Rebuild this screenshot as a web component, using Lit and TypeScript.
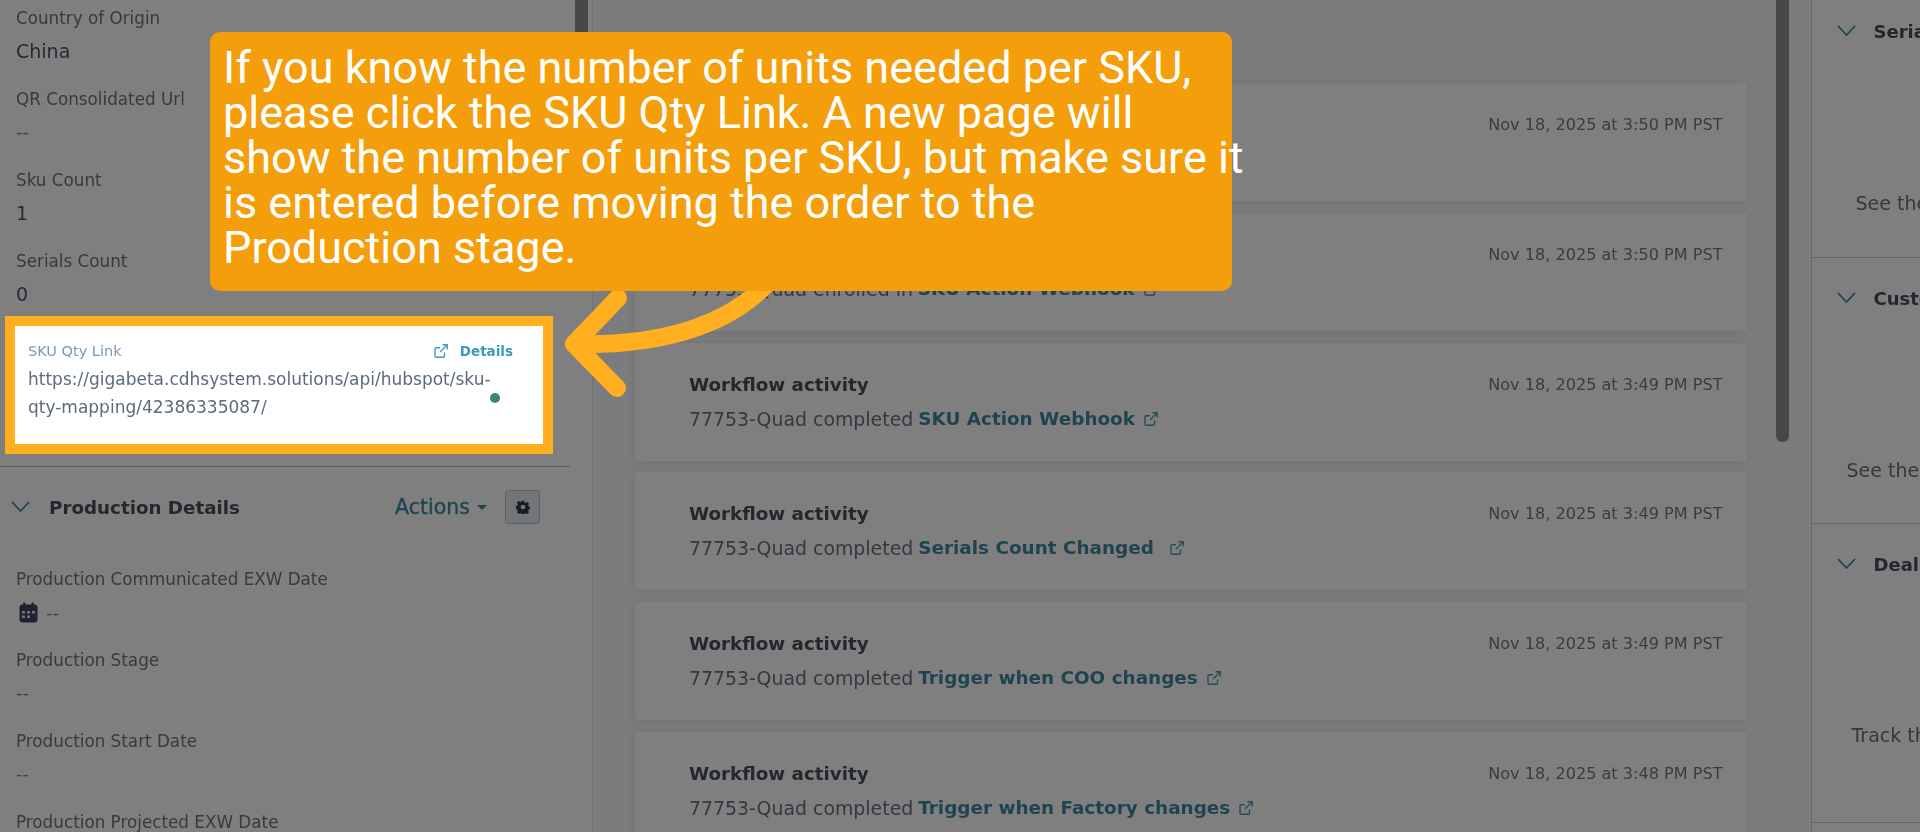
import { LitElement, html, css, svg } from "lit";
import { customElement } from "lit/decorators.js";

const ext = svg`<path d="M11.5 9.5V13a1.2 1.2 0 0 1-1.2 1.2H3.2A1.2 1.2 0 0 1 2 13V5.9a1.2 1.2 0 0 1 1.2-1.2H7" fill="none" stroke="currentColor" stroke-width="1.4"/><path d="M9.5 1.8h4.7v4.7M14 2 7 9" fill="none" stroke="currentColor" stroke-width="1.4"/>`;
const chev = svg`<path d="M1.5 1.5 9.5 10l8-8.500" fill="none" stroke="currentColor" stroke-width="1.800" stroke-linecap="round"/>`;

const fields1 = [
  ["Country of Origin", "China"],
  ["QR Consolidated Url", "--"],
  ["Sku Count", "1"],
  ["Serials Count", "0"],
];
const cards = [
  ["77753-Quad enrolled in ", "SKU Action", "Nov 18, 2025 at 3:50 PM PST", ""],
  ["77753-Quad enrolled in ", "SKU Action Webhook", "Nov 18, 2025 at 3:50 PM PST", ""],
  ["77753-Quad completed ", "SKU Action Webhook", "Nov 18, 2025 at 3:49 PM PST", ""],
  ["77753-Quad completed ", "Serials Count Changed", "Nov 18, 2025 at 3:49 PM PST", "wide"],
  ["77753-Quad completed ", "Trigger when COO changes", "Nov 18, 2025 at 3:49 PM PST", ""],
  ["77753-Quad completed ", "Trigger when Factory changes", "Nov 18, 2025 at 3:48 PM PST", ""],
];
const lines = [
  "If you know the number of units needed per SKU,",
  "please click the SKU Qty Link. A new page will",
  "show the number of units per SKU, but make sure it",
  "is entered before moving the order to the",
  "Production stage.",
];

@customElement("app-root")
export class AppRoot extends LitElement {
  static styles = css`
    :host { display: block; position: relative; width: 1920px; height: 832px; overflow: hidden; background: #fff;
      font-family: "DejaVu Sans", "Noto Sans", sans-serif; }
    .ui { display: grid; grid-template-columns: 593px 1217.500px 1fr; height: 832px; filter: blur(0.55px); overflow: hidden; }

    .left { position: relative; background: #fff; border-right: 1px solid #dfe3eb; box-sizing: border-box; padding-top: 6px; overflow: hidden; }
    .thumb1 { position: absolute; right: 4px; top: 0; width: 13px; height: 200px; background: #909090; }
    .field { height: 81px; padding-left: 16px; box-sizing: border-box; }
    .label { font-size: 16.800px; line-height: 24px; color: #6a7683; font-weight: 400; white-space: nowrap; }
    .value { font-size: 19px; line-height: 24px; margin-top: 9px; color: #46566a; white-space: nowrap; }
    .dash { color: #7a8898; font-size: 18px; }
    .sku { height: 120px; padding: 9px 0 0 28px; box-sizing: border-box; position: relative; }
    .sku-head { display: flex; align-items: center; height: 24px; padding-right: 79px; justify-content: space-between; }
    .sku-label { font-size: 14.500px; color: #7c98b6; }
    .details { display: flex; align-items: center; gap: 11px; font-size: 13.500px; font-weight: 700; color: #3e9ab8; }
    .details svg { width: 16px; height: 16px; }
    .url { font-size: 17px; line-height: 28px; color: #5c6b7c; margin-top: 2px; white-space: nowrap; }
    .dot { position: absolute; left: 490px; top: 63px; width: 10px; height: 10px; border-radius: 50%; background: #38857a; }
    .sep { border-top: 1px solid #bdbdbd; width: 570px; margin-top: 16px; }
    .head { display: flex; align-items: center; height: 34px; margin-top: 23px; padding-left: 11px; }
    .chev { width: 19px; height: 12px; color: #3f8a9a; flex: none; }
    .htitle { font-size: 18.300px; font-weight: 700; color: #46505e; margin-left: 19px; }
    .actions { margin-left: auto; display: flex; align-items: center; gap: 7px; font-size: 20.500px; font-weight: 400; -webkit-text-stroke: 0.35px #3f88a0; color: #3f88a0; }
    .caret { width: 0; height: 0; border-left: 5px solid transparent; border-right: 5px solid transparent; border-top: 5px solid #3f88a0; }
    .gear { width: 35px; height: 34px; box-sizing: border-box; margin: 0 52px 0 18px; border: 1px solid #b5c6d4; border-radius: 3px; background: #e5edf3; display: flex; align-items: center; justify-content: center; }
    .gear svg { width: 14px; height: 14px; }
    .fields2 { margin-top: 43px; }
    .datev { display: flex; align-items: center; gap: 8px; margin: 9px 0 0 3px; height: 24px; }
    .datev svg { width: 19px; height: 21px; }

    .main { background: #f5f8fa; padding: 83px 64px 0 42px; position: relative; display: flex; flex-direction: column; gap: 11.800px; overflow: hidden; }
    .thumb2 { position: absolute; right: 22px; top: 0; width: 13px; height: 442px; border-radius: 0 0 6px 6px; background: #909090; }
    .card { flex: none; height: 118px; box-sizing: border-box; background: #fff; border-radius: 3px; padding: 30px 24px 0 54px; box-shadow: 0 1px 10px rgba(45,62,80,.12); display: flex; justify-content: space-between; }
    .ctitle { font-size: 18.300px; line-height: 24px; font-weight: 700; color: #46505e; white-space: nowrap; }
    .cdesc { font-size: 18.900px; line-height: 24px; margin-top: 10px; color: #667280; white-space: nowrap; display: flex; align-items: center; }
    .link { font-size: 18.400px; font-weight: 700; color: #3f88a0; margin-left: 5px; }
    .cdesc svg { width: 16px; height: 16px; color: #4f98ae; margin-left: 8px; flex: none; }
    .cdesc svg.wide { margin-left: 15px; }
    .date { font-size: 16.100px; line-height: 24px; color: #707b86; white-space: nowrap; }

    .right { background: #fff; border-left: 1px solid #c9cfd6; overflow: hidden; white-space: nowrap; }
    .sec { box-sizing: border-box; border-bottom: 1px solid #c9cfd6; padding: 28px 0 0 25px; }
    .s0 { height: 258px; padding-top: 19px; }
    .s1 { height: 266px; }
    .s2 { height: 299px; }
    .rhead { display: flex; align-items: center; height: 24px; }
    .rhead span { font-size: 18px; font-weight: 700; color: #46505e; margin-left: 18px; }
    .rtext { font-size: 19px; line-height: 24px; color: #667280; margin-top: 148px; }
    .s0 .rtext { margin-left: 19px; }
    .s1 .rtext { margin-left: 10px; }
    .s2 .rtext { margin-left: 15px; margin-top: 147px; }

    .hole { position: absolute; left: 5px; top: 316px; width: 548px; height: 138px; box-sizing: border-box; border: 10px solid #ffaf20; box-shadow: 0 0 0 3000px rgba(0,0,0,.5); }
    .arrow { position: absolute; left: 540px; top: 270px; width: 260px; height: 140px; }
    .callout { position: absolute; left: 210px; top: 32px; width: 1022px; height: 259px; border-radius: 10px; background: #f59e0b; box-sizing: border-box; padding: 13px 0 0 13px; }
    .callout div { font-family: "Roboto", sans-serif; font-size: 45px; line-height: 45px; color: #fff; white-space: nowrap; }
  `;

  private field(l: string, v: string) {
    return html`<div class="field"><div class="label">${l}</div><div class="value ${v === "--" ? "dash" : ""}">${v}</div></div>`;
  }

  render() {
    return html`
      <div class="ui">
        <section class="left">
          <div class="thumb1"></div>
          ${fields1.map(([l, v]) => this.field(l, v))}
          <div class="sku">
            <div class="sku-head">
              <span class="sku-label">SKU Qty Link</span>
              <span class="details"><svg viewBox="0 0 16 16">${ext}</svg>Details</span>
            </div>
            <div class="url">https://gigabeta.cdhsystem.solutions/api/hubspot/sku-<br />qty-mapping/42386335087/</div>
            <i class="dot"></i>
          </div>
          <div class="sep"></div>
          <div class="head">
            <svg class="chev" viewBox="0 0 19 12">${chev}</svg>
            <span class="htitle">Production Details</span>
            <span class="actions">Actions<i class="caret"></i></span>
            <span class="gear"><svg viewBox="0 0 16 16"><path fill="#2f3a46" fill-rule="evenodd" d="M6.600.8h2.800l.4 2 1.300.6 1.800-1.100 2 2-1.100 1.800.6 1.300 2 .4v2.800l-2 .4-.6 1.300 1.100 1.800-2 2-1.800-1.100-1.300.6-.4 2H6.600l-.4-2-1.300-.6-1.800 1.100-2-2 1.100-1.800-.6-1.300-2-.4V6.600l2-.4.600-1.300-1.100-1.800 2-2 1.800 1.100 1.300-.6zM8 5.300a2.700 2.700 0 1 0 0 5.400 2.700 2.700 0 0 0 0-5.400z"/></svg></span>
          </div>
          <div class="fields2">
            <div class="field"><div class="label">Production Communicated EXW Date</div>
              <div class="datev">
                <svg viewBox="0 0 19 21"><rect x="0.500" y="2.500" width="18" height="18" rx="3" fill="#39465a"/><rect x="4" y="0.500" width="2.500" height="4" rx="1" fill="#39465a"/><rect x="12.500" y="0.500" width="2.500" height="4" rx="1" fill="#39465a"/><g fill="#dfe5ec"><rect x="3" y="9" width="3" height="2.600"/><rect x="8" y="9" width="3" height="2.600"/><rect x="13" y="9" width="3" height="2.600"/><rect x="3" y="13.500" width="3" height="2.600"/><rect x="8" y="13.500" width="3" height="2.600"/></g></svg>
                <span class="dash">--</span>
              </div>
            </div>
            ${this.field("Production Stage", "--")}
            ${this.field("Production Start Date", "--")}
            ${this.field("Production Projected EXW Date", "--")}
          </div>
        </section>

        <section class="main">
          <div class="thumb2"></div>
          ${cards.map(([a, b, d, w]) => html`
            <article class="card">
              <div>
                <div class="ctitle">Workflow activity</div>
                <div class="cdesc">${a}<span class="link">${b}</span><svg class=${w} viewBox="0 0 16 16">${ext}</svg></div>
              </div>
              <div class="date">${d}</div>
            </article>`)}
        </section>

        <section class="right">
          <div class="sec s0"><div class="rhead"><svg class="chev" viewBox="0 0 19 12">${chev}</svg><span>Serials</span></div><div class="rtext">See the serials associated</div></div>
          <div class="sec s1"><div class="rhead"><svg class="chev" viewBox="0 0 19 12">${chev}</svg><span>Customer</span></div><div class="rtext">See the customer</div></div>
          <div class="sec s2"><div class="rhead"><svg class="chev" viewBox="0 0 19 12">${chev}</svg><span>Deal</span></div><div class="rtext">Track the deal</div></div>
        </section>
      </div>

      <div class="hole"></div>
      <svg class="arrow" viewBox="0 0 260 140" fill="none" stroke="#ffaf20" stroke-width="18" stroke-linecap="round" stroke-linejoin="round">
        <path d="M238 0C195 60 110 76 34 74"/>
        <path d="M78 28 34 74 77 118"/>
      </svg>
      <div class="callout">${lines.map((l) => html`<div>${l}</div>`)}</div>
    `;
  }
}
